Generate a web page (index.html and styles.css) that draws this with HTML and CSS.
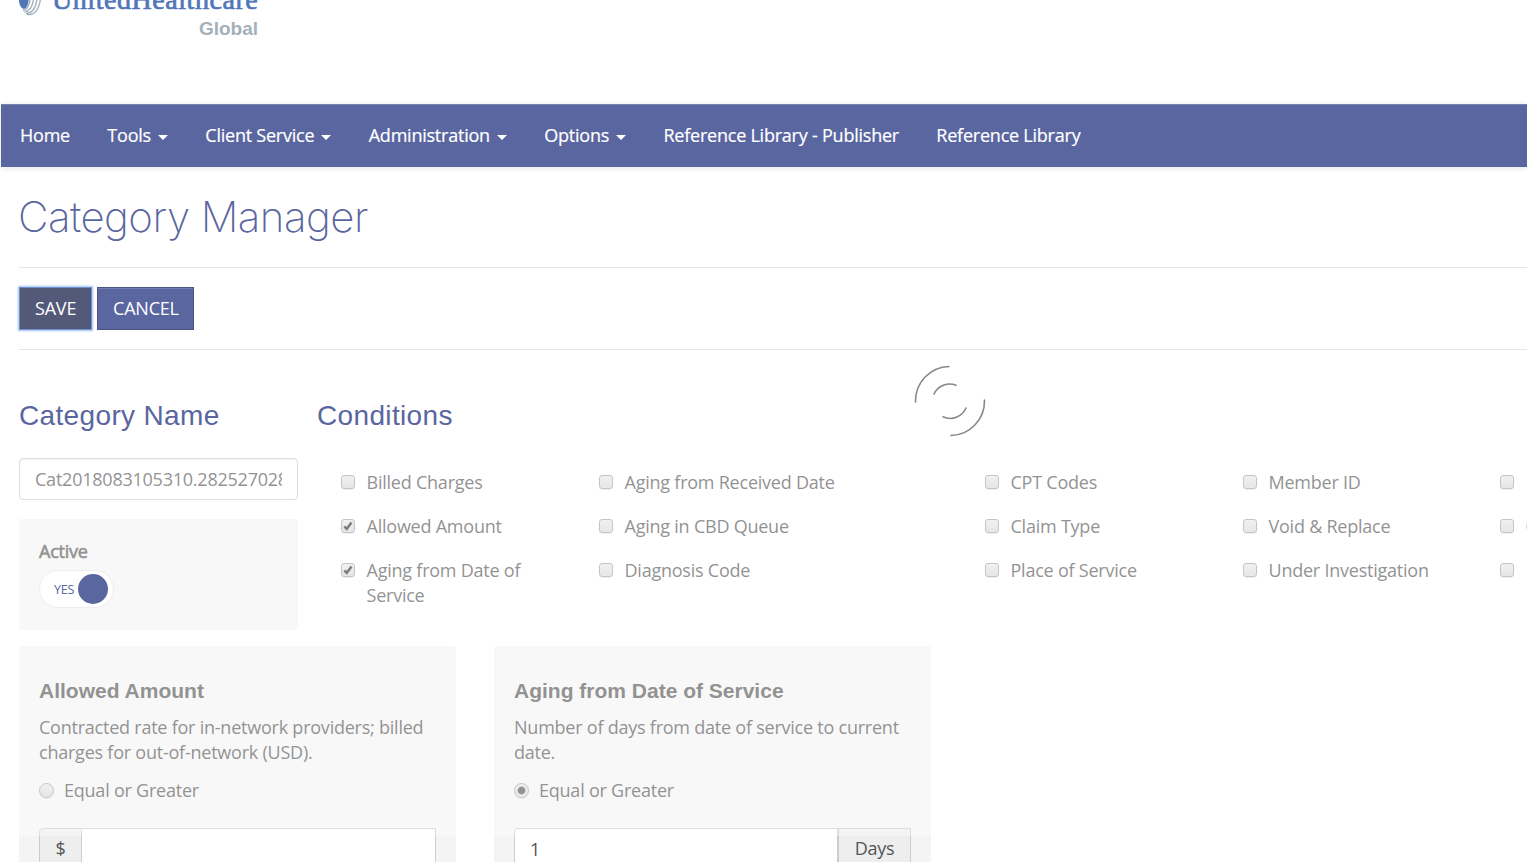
FILE: index.html
```
<!DOCTYPE html>
<html lang="en">
<head>
<meta charset="utf-8">
<title>Category Manager</title>
<link rel="stylesheet" href="styles.css">
</head>
<body>
<header class="brand">
  <svg class="brand-mark" width="24" height="36" viewBox="0 0 24 36">
    <ellipse cx="4.800" cy="18" rx="5" ry="11" fill="#5076b8"/>
    <g fill="none" stroke="#a3b1ba" stroke-width="1.400">
      <path d="M4 30.500Q11 29 11.500 15"/><path d="M5.500 32Q14 31 15 15"/><path d="M7 33.500Q17 33.500 18.500 15"/><path d="M8 34.200Q20 36.500 22 15"/>
    </g>
  </svg>
  <div class="brand-text"><div class="brand-name">UnitedHealthcare</div><div class="brand-sub">Global</div></div>
</header>
<nav class="nav">
  <a>Home</a><a>Tools<i class="caret"></i></a><a>Client Service<i class="caret"></i></a><a>Administration<i class="caret"></i></a><a>Options<i class="caret"></i></a><a>Reference Library - Publisher</a><a>Reference Library</a>
</nav>
<main class="page">
  <h1><span>Category Manager</span></h1>
  <div class="toolbar"><button class="btn btn-focus">SAVE</button><button class="btn">CANCEL</button></div>
  <div class="form">
    <div class="top">
      <section class="name">
        <h2>Category Name</h2>
        <div class="field"><div class="clip">Cat2018083105310.2825270281</div></div>
        <div class="well active">
          <div class="active-label">Active</div>
          <div class="toggle"><span>YES</span><i></i></div>
        </div>
      </section>
      <section class="conditions">
        <h2>Conditions</h2>
        <div class="grid">
          <label><i class="check"></i><span>Billed Charges</span></label>
          <label><i class="check"></i><span>Aging from Received Date</span></label>
          <label><i class="check"></i><span>CPT Codes</span></label>
          <label><i class="check"></i><span>Member ID</span></label>
          <label><i class="check"></i></label>
          <label><i class="check"><svg viewBox="0 0 14 14"><path d="M3.300 7.500L5.800 9.800L10.500 3.500"/></svg></i><span>Allowed Amount</span></label>
          <label><i class="check"></i><span>Aging in CBD Queue</span></label>
          <label><i class="check"></i><span>Claim Type</span></label>
          <label><i class="check"></i><span>Void &amp; Replace</span></label>
          <label><i class="check"></i><span>C</span></label>
          <label><i class="check"><svg viewBox="0 0 14 14"><path d="M3.300 7.500L5.800 9.800L10.500 3.500"/></svg></i><span>Aging from Date of Service</span></label>
          <label><i class="check"></i><span>Diagnosis Code</span></label>
          <label><i class="check"></i><span>Place of Service</span></label>
          <label><i class="check"></i><span>Under Investigation</span></label>
          <label><i class="check"></i></label>
        </div>
      </section>
    </div>
    <div class="cards">
      <section class="well card">
        <h3>Allowed Amount</h3>
        <p>Contracted rate for in-network providers; billed charges for out-of-network (USD).</p>
        <div class="option"><i class="radio"></i><span>Equal or Greater</span></div>
        <div class="group"><span class="addon addon-left">$</span><span class="control"></span></div>
      </section>
      <section class="well card">
        <h3>Aging from Date of Service</h3>
        <p>Number of days from date of service to current date.</p>
        <div class="option"><i class="radio radio-on"></i><span>Equal or Greater</span></div>
        <div class="group"><span class="control control-left">1</span><span class="addon addon-right">Days</span></div>
      </section>
    </div>
    <div class="mask"></div>
    <svg class="spinner" width="74" height="74" viewBox="-37 -37 74 74">
      <path d="M-34.500 1A34.500 34.500 0 0 1-1-34.500M34.500-1A34.500 34.500 0 0 1 1 34.500M-16-7A17.200 17.200 0 0 1 6-15.800M16 7A17.200 17.200 0 0 1-7 15.800"/>
    </svg>
  </div>
</main>
</body>
</html>
```
FILE: styles.css
```
* { box-sizing: border-box; }
body {
  margin: 0;
  height: 862px;
  overflow: hidden;
  background: #fff;
  color: #555;
  font: 18px/25px "Open Sans", sans-serif;
  letter-spacing: -.23px;
}
h1, h2, h3, p { margin: 0; }
h1, h2 { color: #5a66a0; }

.brand { display: flex; height: 104px; padding-left: 19px; overflow: hidden; }
.brand-mark { margin-top: -20px; margin-right: 9px; flex: none; }
.brand-text { width: 206px; margin-top: -16px; }
.brand-name {
  color: #5076b8;
  font: 28px/32px "Liberation Serif", serif;
  letter-spacing: .55px;
  -webkit-text-stroke: .7px #5076b8;
  white-space: nowrap;
}
.brand-sub {
  margin-top: 1px;
  color: #a3b1ba;
  font: bold 19px/24px "Liberation Sans", sans-serif;
  letter-spacing: 0;
  text-align: right;
}

.nav {
  display: flex;
  gap: 37.400px;
  height: 63px;
  margin-left: 1px;
  padding-left: 19px;
  background: #5a66a0;
  border-top: 1px solid #7580ad;
  box-shadow: 0 1px 6px rgba(0, 0, 0, .12);
  color: #fff;
  line-height: 60px;
  white-space: nowrap;
  -webkit-text-stroke: .2px #fff;
}
.nav a { display: flex; align-items: center; height: 60px; }
.caret {
  margin: 4px 0 0 7px;
  border: 5px solid transparent;
  border-top-color: #fff;
  border-bottom: 0;
}

.page { padding-left: 19px; }
h1 {
  height: 101px;
  padding-top: 24px;
  border-bottom: 1px solid #e6e6e6;
  font: 200 42px/52px Inter, "Liberation Sans", sans-serif;
  letter-spacing: -.550px;
}
h1 span { margin-left: -1px; }
.toolbar {
  display: flex;
  gap: 5px;
  height: 82px;
  padding-top: 19px;
  border-bottom: 1px solid #e6e6e6;
}
.btn {
  height: 43px;
  padding: 0 15px;
  background: #5a66a0;
  border: 1px solid #4c5581;
  border-radius: 0;
  box-shadow: inset 0 1px 0 rgba(255, 255, 255, .15);
  color: #fff;
  font: 18px/25px "Open Sans", sans-serif;
  letter-spacing: -.2px;
}
.btn-focus { width: 73px; background: #535979; border-color: #6d90cd; box-shadow: 0 0 2px 1px #a5c5f5; }
.btn:last-child { width: 97px; }

.form { position: relative; height: 512px; }
.top { display: flex; height: 296px; padding-top: 48px; }
h2 { font: 28px/36px "Liberation Sans", sans-serif; letter-spacing: .35px; }
.name { width: 279px; flex: none; margin-right: 19px; }
.field {
  height: 42px;
  margin-top: 24px;
  padding: 8px 15px;
  border: 1px solid #ccc;
  border-radius: 4px;
  box-shadow: inset 0 1px 1px rgba(0, 0, 0, .075);
}
.clip { overflow: hidden; white-space: nowrap; }
.well { background: #f4f4f4; border-radius: 3px; }
.active { height: 111px; margin-top: 19px; padding: 20px; }
.active-label { -webkit-text-stroke: .6px #555; }
.toggle {
  display: flex;
  align-items: center;
  width: 75px;
  height: 38px;
  margin-top: 6px;
  padding-left: 14px;
  background: #fff;
  border: 1px solid #eee;
  border-radius: 19px;
  position: relative;
  z-index: 2;
  color: #5a66a0;
  font-size: 12.500px;
}
.toggle span { width: 24px; }
.toggle i { width: 30px; height: 30px; border-radius: 50%; background: #5a66a0; }

.conditions { flex: none; width: 1212px; }
.grid {
  display: grid;
  grid-template-columns: 258px 386px 258px 257px 60px;
  row-gap: 19px;
  margin: 36px 0 0 24px;
}
.grid label { display: flex; align-items: flex-start; padding-right: 55px; }
.grid label:nth-child(5n+4) { padding-right: 0; }
.check, .radio {
  flex: none;
  width: 14px;
  height: 14px;
  margin: 5px 11.500px 0 0;
  border: 1px solid #a5a5a5;
  border-radius: 3px;
  background: linear-gradient(#e8e8e8, #d8d8d8);
  box-shadow: 0 1px 1px rgba(0, 0, 0, .1);
}
.check svg { display: block; width: 14px; height: 14px; margin: -1px; }
.check path { fill: none; stroke: #333; stroke-width: 2.500; }

.cards { display: flex; gap: 38px; }
.card { width: 437px; height: 250px; padding: 32px 20px; }
h3 { font: bold 21px/26px "Liberation Sans", sans-serif; letter-spacing: 0; }
.card p { margin-top: 11px; }
.option { display: flex; margin-top: 13px; }
.radio { width: 15px; height: 15px; margin: 5px 10px 0 0; border-radius: 50%; }
.radio-on { background: radial-gradient(circle, #555 0 3.300px, #e2e2e2 4.300px); }
.group { display: flex; height: 43px; margin-top: 25px; }
.group span { border: 1px solid #ccc; line-height: 40px; }
.group .addon { background: #eee; text-align: center; line-height: 38px; }
.addon-left { width: 43px; border-radius: 4px 0 0; }
.addon-right { width: 73px; }
.control { flex: 1; background: #fff; border-left: 0 !important; padding-left: 15px; }
.control-left { border-left: 1px solid #ccc !important; border-radius: 4px 0 0; }

.mask {
  position: absolute;
  inset: 96px 0 26px -19px;
  background: rgba(255, 255, 255, .36);
}
.spinner { position: absolute; left: 894px; top: 14px; }
.spinner path { fill: none; stroke: #888; stroke-width: 1.600; stroke-linecap: round; }
```
